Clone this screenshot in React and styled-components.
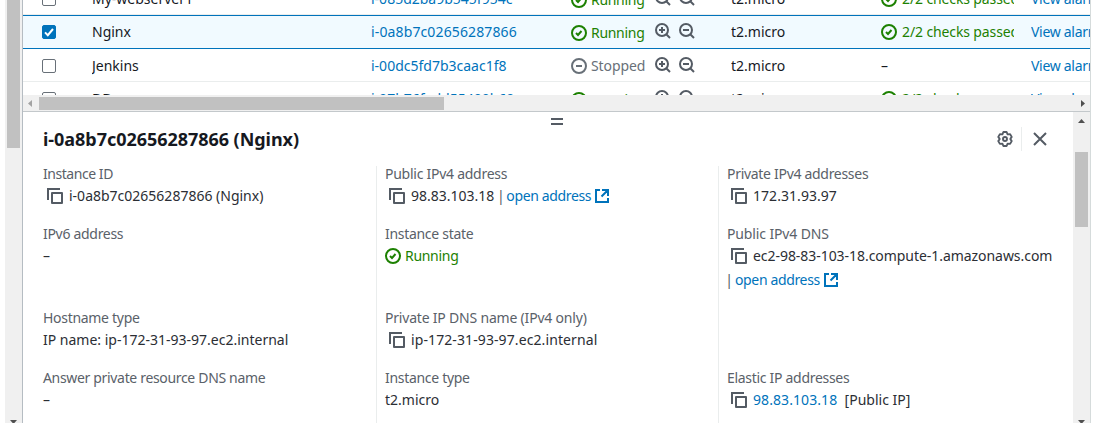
import React from "react";
import styled, { createGlobalStyle } from "styled-components";

const Global = createGlobalStyle`
  * { box-sizing: border-box; }
  body { margin: 0; background: #fff; overflow: hidden; }
  svg { flex: none; }
`;

const Page = styled.div`
  display: flex;
  width: 1119px;
  height: 423px;
  padding-left: 5px;
  overflow: hidden;
  background: #fff;
  font: 14px/22px "Noto Sans", sans-serif;
  color: #16191f;
`;
const VScroll = styled.div`
  display: flex;
  flex-direction: column;
  justify-content: space-between;
  align-items: center;
  flex: none;
  width: 17px;
  background: #f0f0f0;
  padding-top: ${(p) => p.$top}px;
`;
const VThumb = styled.div`
  width: 13px;
  height: ${(p) => p.$h}px;
  background: #c1c1c1;
  margin-top: ${(p) => p.$mt || 0}px;
  margin-bottom: auto;
`;
const Arrow = styled.svg`
  display: block;
  flex: none;
  fill: ${(p) => p.$color || "#505050"};
  margin-bottom: ${(p) => p.$mb || 0}px;
`;
const Main = styled.div`
  display: flex;
  flex-direction: column;
  width: 1069px;
  height: 423px;
  border-left: 1px solid #b5bcc2;
  border-right: 1px solid #d5dbdb;
`;
const Table = styled.div`
  display: flex;
  flex-direction: column;
  justify-content: flex-start;
  height: 95px;
  flex: none;
  overflow: hidden;
`;
const Row = styled.div`
  display: grid;
  grid-template-columns: 69px 279px 200px 160px 150px 150px 60px;
  align-items: center;
  flex: none;
  height: ${(p) => p.$h || 33}px;
  margin-top: ${(p) => p.$mt || 0}px;
  margin-left: -1px;
  padding: 2px 0 0 1px;
  white-space: nowrap;
  border-bottom: 1px solid #eaeded;
  ${(p) => p.$selected && `
    background: #f1faff;
    border: 1px solid #0073bb;
    border-right: 0;
    padding: 0;
  `}
`;
const Cell = styled.div`
  display: flex;
  align-items: center;
  overflow: hidden;
  height: 24px;
  width: ${(p) => (p.$w ? p.$w + "px" : "auto")};
  gap: ${(p) => p.$gap || 0}px;
`;
const Check = styled.span`
  display: flex;
  width: 14px;
  height: 14px;
  margin-left: 19px;
  border: 1px solid ${(p) => (p.$on ? "#0073bb" : "#687078")};
  border-radius: 2px;
  background: ${(p) => (p.$on ? "#0073bb" : "#fff")};
`;
const tones = { link: "#0073bb", ok: "#1d8102", muted: "#687078", value: "#16191f", soft: "#2b2e34" };
const T = styled.span`
  color: ${(p) => tones[p.$tone || "value"]};
  letter-spacing: ${(p) => p.$ls || 0}px;
  white-space: pre;
`;
const Zooms = styled.span`
  display: flex;
  gap: 8px;
  margin: 0 0 2px;
`;
const State = styled.span`
  display: flex;
  align-items: center;
  gap: 4px;
  width: 84px;
  padding-top: ${(p) => p.$down || 0}px;
`;
const HScroll = styled.div`
  display: flex;
  align-items: center;
  flex: none;
  height: 16px;
  padding: 0 5px;
  background: #f0f0f0;
`;
const HThumb = styled.div`
  width: 405px;
  height: 13px;
  margin: 1px auto 0 7px;
  background: #c1c1c1;
`;
const Panel = styled.section`
  display: flex;
  flex: 1;
  min-height: 0;
  border-top: 1px solid #c3c8cb;
`;
const Body = styled.div`
  flex: 1;
  padding: 6px 0 0 20px;
  overflow: hidden;
`;
const Grip = styled.div`
  width: 12px;
  height: 7px;
  margin-left: 508px;
  border: solid #545b64;
  border-width: 2px 0;
`;
const Header = styled.header`
  display: flex;
  align-items: center;
  height: 24px;
  margin-top: 2px;
`;
const Title = styled.h2`
  margin: 0 auto 0 0;
  font-size: 18px;
  line-height: 24px;
  font-weight: 700;
  white-space: nowrap;
  letter-spacing: -0.04px;
`;
const Rule = styled.span`
  width: 1px;
  height: 24px;
  margin: 0 11px 0 8px;
  background: #eaeded;
`;
const Tools = styled.div`
  display: flex;
  align-items: center;
  padding-right: 26px;
`;
const Columns = styled.div`
  display: grid;
  grid-template-columns: 333px 342px 1fr;
  margin-top: 15px;
`;
const Column = styled.div`
  height: 260px;
  padding-left: ${(p) => (p.$ruled ? 8 : 0)}px;
  border-left: ${(p) => (p.$ruled ? "1px solid #eaeded" : "0")};
  & > :first-child { margin-top: -2px; }
`;
const Field = styled.div`
  height: ${(p) => (p.$tall ? 84 : 60)}px;
`;
const Label = styled.div`
  line-height: 20px;
  height: 20px;
  color: #5a6169;
  white-space: nowrap;
  letter-spacing: ${(p) => p.$ls ?? -0.3}px;
`;
const Value = styled.div`
  display: flex;
  align-items: center;
  height: 24px;
  white-space: nowrap;
  color: #2b2e34;
`;
const Bar = styled.span`
  display: flex;
  justify-content: center;
  width: ${(p) => (p.$lead ? 4 : 5)}px;
  margin: ${(p) => (p.$lead ? "0 4px 0 0" : "0 3px 0 4px")};
  color: #545b64;
`;

const CopySvg = styled.svg`
  margin: 0 6px 0 4px;
`;
const Copy = () => (
  <CopySvg width="16" height="16" viewBox="0 0 16 16" fill="none" stroke="#545b64" strokeWidth="2">
    <path d="M1 12V1h12" />
    <path d="M5 5h10v10H5z" strokeLinejoin="round" />
  </CopySvg>
);
const ExtSvg = styled.svg`
  margin-left: 3px;
`;
const External = () => (
  <ExtSvg width="16" height="16" viewBox="0 0 16 16" fill="none" stroke="#0073bb" strokeWidth="2">
    <path d="M6 2H2v12h12v-4M8 2h6v6M14 2 7.5 8.5" />
  </ExtSvg>
);
const Ok = () => (
  <svg width="16" height="16" viewBox="0 0 16 16" fill="none" stroke="#1d8102" strokeWidth="2">
    <circle cx="8" cy="8" r="7" />
    <path d="m5 8 2 2 3.5-4" />
  </svg>
);
const Stopped = () => (
  <svg width="16" height="16" viewBox="0 0 16 16" fill="none" stroke="#687078" strokeWidth="2">
    <circle cx="8" cy="8" r="7" />
    <path d="M5 8h6" />
  </svg>
);
const Zoom = ({ plus }) => (
  <svg width="16" height="16" viewBox="0 0 16 16" fill="none" stroke="#545b64" strokeWidth="2">
    <circle cx="7" cy="7" r="6" />
    <path d="m11 11 4 4" />
    <path d={plus ? "M4 7h6M7 4v6" : "M4 7h6"} />
  </svg>
);
const Gear = () => (
  <svg width="16" height="16" viewBox="0 0 16 16" fill="none" stroke="#545b64" strokeWidth="1.9" strokeLinejoin="round">
    <path d="M6.4 1h3.2l1 2.4 2.5-.3 1.6 2.8L13.3 8l1.4 2.1-1.6 2.8-2.5-.3-1 2.4H6.4l-1-2.4-2.5.3-1.6-2.8L2.7 8 1.3 5.9l1.6-2.8 2.5.3z" />
    <circle cx="8" cy="8" r="2" />
  </svg>
);
const Close = () => (
  <svg width="14" height="14" viewBox="0 0 14 14" fill="none" stroke="#545b64" strokeWidth="2">
    <path d="m1 1 12 12M13 1 1 13" />
  </svg>
);

const instances = [
  { name: "My-webserver1", id: "i-085d2ba9b545f954c", mt: -18 },
  { name: "Nginx", id: "i-0a8b7c02656287866", idLs: 0.13, selected: true, h: 34 },
  { name: "Jenkins", id: "i-00dc5fd7b3caac1f8", stopped: true },
  { name: "DB", id: "i-07b76fadd55400b60" },
];

const Instance = ({ name, id, idLs, mt, h, selected, stopped }) => (
  <Row $selected={selected} $mt={mt} $h={h}>
    <Cell>
      <Check $on={selected}>
        {selected && (
          <svg width="12" height="12" viewBox="0 0 12 12" fill="none" stroke="#fff" strokeWidth="2">
            <path d="m2 6.4 2.8 2.8L10 3" />
          </svg>
        )}
      </Check>
    </Cell>
    <Cell><T>{name}</T></Cell>
    <Cell><T $tone="link" $ls={idLs}>{id}</T></Cell>
    <Cell>
      <State $down={stopped ? 0 : 2}>
        {stopped ? <Stopped /> : <Ok />}
        <T $tone={stopped ? "muted" : "ok"} $ls={stopped ? -0.1 : -0.3}>{stopped ? "Stopped" : "Running"}</T>
      </State>
      <Zooms><Zoom plus /><Zoom /></Zooms>
    </Cell>
    <Cell><T>t2.micro</T></Cell>
    <Cell $w={133} $gap={5}>
      {stopped ? <T>–</T> : <><Ok /><T $tone="ok" $ls={-0.12}>2/2 checks passed</T></>}
    </Cell>
    <Cell><T $tone="link" $ls={-0.3}>View alarms</T></Cell>
  </Row>
);

export default function App() {
  return (
    <Page>
      <Global />
      <VScroll $top={0}>
        <VThumb $h={148} />
        <Arrow width="7" height="4" $mb={-1}><path d="M0 0h7L3.5 4z" /></Arrow>
      </VScroll>
      <Main>
        <Table>
          {instances.map((i) => <Instance key={i.id} {...i} />)}
        </Table>
        <HScroll>
          <Arrow $color="#a3a3a3" width="4" height="7"><path d="M4 0v7L0 3.5z" /></Arrow>
          <HThumb />
          <Arrow width="4" height="7"><path d="M0 0v7l4-3.5z" /></Arrow>
        </HScroll>
        <Panel>
          <Body>
            <Grip />
            <Header>
              <Title>i-0a8b7c02656287866 (Nginx)</Title>
              <Tools><Gear /><Rule /><Close /></Tools>
            </Header>
            <Columns>
              <Column>
                <Field><Label $ls={-0.45}>Instance ID</Label><Value><Copy /><T $tone="soft">i-0a8b7c02656287866 (Nginx)</T></Value></Field>
                <Field $tall><Label>IPv6 address</Label><Value>–</Value></Field>
                <Field><Label>Hostname type</Label><Value><T $tone="soft">IP name: ip-172-31-93-97.ec2.internal</T></Value></Field>
                <Field><Label $ls={-0.33}>Answer private resource DNS name</Label><Value>–</Value></Field>
              </Column>
              <Column $ruled>
                <Field><Label $ls={-0.26}>Public IPv4 address</Label><Value><Copy /><T $tone="soft">98.83.103.18</T><Bar>|</Bar><T $tone="link" $ls={-0.36}>open address</T><External /></Value></Field>
                <Field $tall><Label>Instance state</Label><Value><State><Ok /><T $tone="ok" $ls={-0.3}>Running</T></State></Value></Field>
                <Field><Label $ls={-0.2}>Private IP DNS name (IPv4 only)</Label><Value><Copy /><T $tone="soft" $ls={0.1}>ip-172-31-93-97.ec2.internal</T></Value></Field>
                <Field><Label>Instance type</Label><Value><T $tone="soft">t2.micro</T></Value></Field>
              </Column>
              <Column $ruled>
                <Field><Label>Private IPv4 addresses</Label><Value><Copy /><T $tone="soft" $ls={0.05}>172.31.93.97</T></Value></Field>
                <Field $tall>
                  <Label $ls={-0.13}>Public IPv4 DNS</Label>
                  <Value><Copy /><T $tone="soft" $ls={-0.05}>ec2-98-83-103-18.compute-1.amazonaws.com</T></Value>
                  <Value><Bar $lead>|</Bar><T $tone="link" $ls={-0.36}>open address</T><External /></Value>
                </Field>
                <Field />
                <Field><Label>Elastic IP addresses</Label><Value><Copy /><T $tone="link" $ls={0.08}>98.83.103.18</T><T $tone="soft">  [Public IP]</T></Value></Field>
              </Column>
            </Columns>
          </Body>
          <VScroll $top={7}>
            <Arrow width="7" height="4"><path d="M0 4h7L3.5 0z" /></Arrow>
            <VThumb $h={75} $mt={29} />
            <Arrow width="7" height="4" $mb={-1}><path d="M0 0h7L3.5 4z" /></Arrow>
          </VScroll>
        </Panel>
      </Main>
    </Page>
  );
}
